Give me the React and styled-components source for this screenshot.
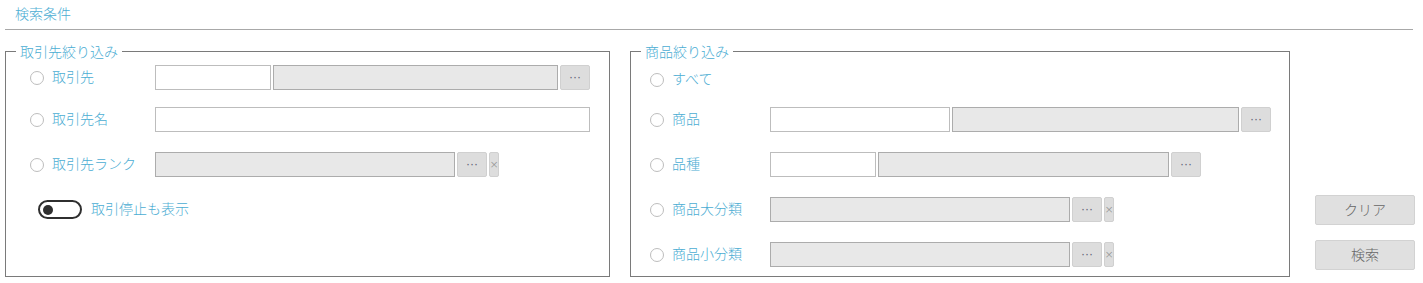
import * as React from 'react';
import styled, { createGlobalStyle } from 'styled-components';

const GlobalStyle = createGlobalStyle`
  body {
    margin: 0;
    background: #fff;
    font-family: "Noto Sans CJK JP", "Liberation Sans", sans-serif;
    font-size: 14px;
    font-weight: 300;
  }
`;

const Page = styled.div`
  padding: 0 10px 0 5px;
`;

const Title = styled.div`
  height: 29px;
  line-height: 27px;
  padding-left: 10px;
  color: #4badd3;
  border-bottom: 1px solid #a8a8a8;
`;

const Main = styled.div`
  display: flex;
  margin-top: 12px;
`;

const Group = styled.fieldset`
  box-sizing: border-box;
  flex: none;
  width: ${(p) => p.$width}px;
  height: 235px;
  margin: 0 ${(p) => p.$gap || 0}px 0 0;
  padding: 0;
  border: 1px solid #7a7a7a;
  min-inline-size: 0;
`;

const Legend = styled.legend`
  margin-left: 10px;
  padding: 0 4px;
  line-height: 18px;
  color: #4badd3;
`;

const Body = styled.div`
  padding-left: ${(p) => p.$pad}px;
`;

const Row = styled.div`
  display: flex;
  align-items: center;
  height: 25px;
  margin-top: ${(p) => p.$mt}px;
`;

const Choice = styled.label`
  display: flex;
  align-items: center;
  width: ${(p) => p.$w}px;
  flex: none;
  color: #4badd3;
  gap: 8px;
`;

const ChoiceText = styled.span`
  padding-bottom: 4px;
`;

const Radio = styled.span`
  box-sizing: border-box;
  width: 14px;
  height: 14px;
  border-radius: 50%;
  border: 1px solid #bdbdbd;
  background: #fff;
`;

const Fields = styled.div`
  display: flex;
  gap: 2px;
  height: 25px;
`;

const Input = styled.div`
  box-sizing: border-box;
  width: ${(p) => p.$w}px;
  height: 25px;
  border: 1px solid ${(p) => (p.$ro ? '#acacac' : '#bdbdbd')};
  background: ${(p) => (p.$ro ? '#e8e8e8' : '#fff')};
`;

const PickButton = styled.div`
  box-sizing: border-box;
  width: 30px;
  height: 25px;
  padding-bottom: 2px;
  border: 1px solid #d0d0d0;
  border-radius: 2px;
  background: #dddddd;
  color: #5c6075;
  font-family: "Liberation Sans", sans-serif;
  font-size: 12px;
  font-weight: 400;
  display: flex;
  align-items: center;
  justify-content: center;
`;

const ClearButton = styled.div`
  box-sizing: border-box;
  width: 10px;
  height: 25px;
  border: 1px solid #d0d0d0;
  border-radius: 2px;
  background: #dddddd;
  color: #8a8a8a;
  font-family: "DejaVu Sans", sans-serif;
  font-size: 11px;
  display: flex;
  align-items: center;
  justify-content: center;
`;

const ToggleRow = styled.div`
  display: flex;
  align-items: center;
  height: 25px;
  margin-top: 20px;
  padding-left: 8px;
  gap: 9px;
  color: #4badd3;
`;

const ToggleText = styled.span`
  padding-bottom: 3px;
`;

const Switch = styled.span`
  box-sizing: border-box;
  width: 44px;
  height: 19px;
  border: 2px solid #2f2f2f;
  border-radius: 10px;
  padding-left: 3px;
  display: flex;
  align-items: center;
`;

const Knob = styled.span`
  width: 10px;
  height: 10px;
  border-radius: 50%;
  background: #2f2f2f;
`;

const Actions = styled.div`
  flex: none;
  display: flex;
  flex-direction: column;
  justify-content: flex-end;
  gap: 15px;
  margin-left: 25px;
  padding-bottom: 7px;
`;

const ActionButton = styled.div`
  box-sizing: border-box;
  width: 100px;
  height: 30px;
  padding-bottom: 3px;
  border: 1px solid #d2d2d2;
  border-radius: 2px;
  background: #e0e0e0;
  color: #666;
  display: flex;
  align-items: center;
  justify-content: center;
`;

function Pick({ clear }) {
  return (
    <>
      <PickButton>···</PickButton>
      {clear && <ClearButton>×</ClearButton>}
    </>
  );
}

function Option({ w, children }) {
  return (
    <Choice $w={w}>
      <Radio />
      <ChoiceText>{children}</ChoiceText>
    </Choice>
  );
}

export default function App() {
  return (
    <Page>
      <GlobalStyle />
      <Title>検索条件</Title>
      <Main>
        <Group $width={605} $gap={20}>
          <Legend>取引先絞り込み</Legend>
          <Body $pad={24}>
            <Row $mt={5}>
              <Option w={125}>取引先</Option>
              <Fields>
                <Input $w={116} />
                <Input $w={285} $ro />
                <Pick />
              </Fields>
            </Row>
            <Row $mt={17}>
              <Option w={125}>取引先名</Option>
              <Input $w={435} />
            </Row>
            <Row $mt={20}>
              <Option w={125}>取引先ランク</Option>
              <Fields>
                <Input $w={300} $ro />
                <Pick clear />
              </Fields>
            </Row>
            <ToggleRow>
              <Switch><Knob /></Switch>
              <ToggleText>取引停止も表示</ToggleText>
            </ToggleRow>
          </Body>
        </Group>

        <Group $width={660}>
          <Legend>商品絞り込み</Legend>
          <Body $pad={19}>
            <Row $mt={7}>
              <Option w={120}>すべて</Option>
            </Row>
            <Row $mt={15}>
              <Option w={120}>商品</Option>
              <Fields>
                <Input $w={180} />
                <Input $w={287} $ro />
                <Pick />
              </Fields>
            </Row>
            <Row $mt={20}>
              <Option w={120}>品種</Option>
              <Fields>
                <Input $w={106} />
                <Input $w={291} $ro />
                <Pick />
              </Fields>
            </Row>
            <Row $mt={20}>
              <Option w={120}>商品大分類</Option>
              <Fields>
                <Input $w={300} $ro />
                <Pick clear />
              </Fields>
            </Row>
            <Row $mt={20}>
              <Option w={120}>商品小分類</Option>
              <Fields>
                <Input $w={300} $ro />
                <Pick clear />
              </Fields>
            </Row>
          </Body>
        </Group>

        <Actions>
          <ActionButton>クリア</ActionButton>
          <ActionButton>検索</ActionButton>
        </Actions>
      </Main>
    </Page>
  );
}
